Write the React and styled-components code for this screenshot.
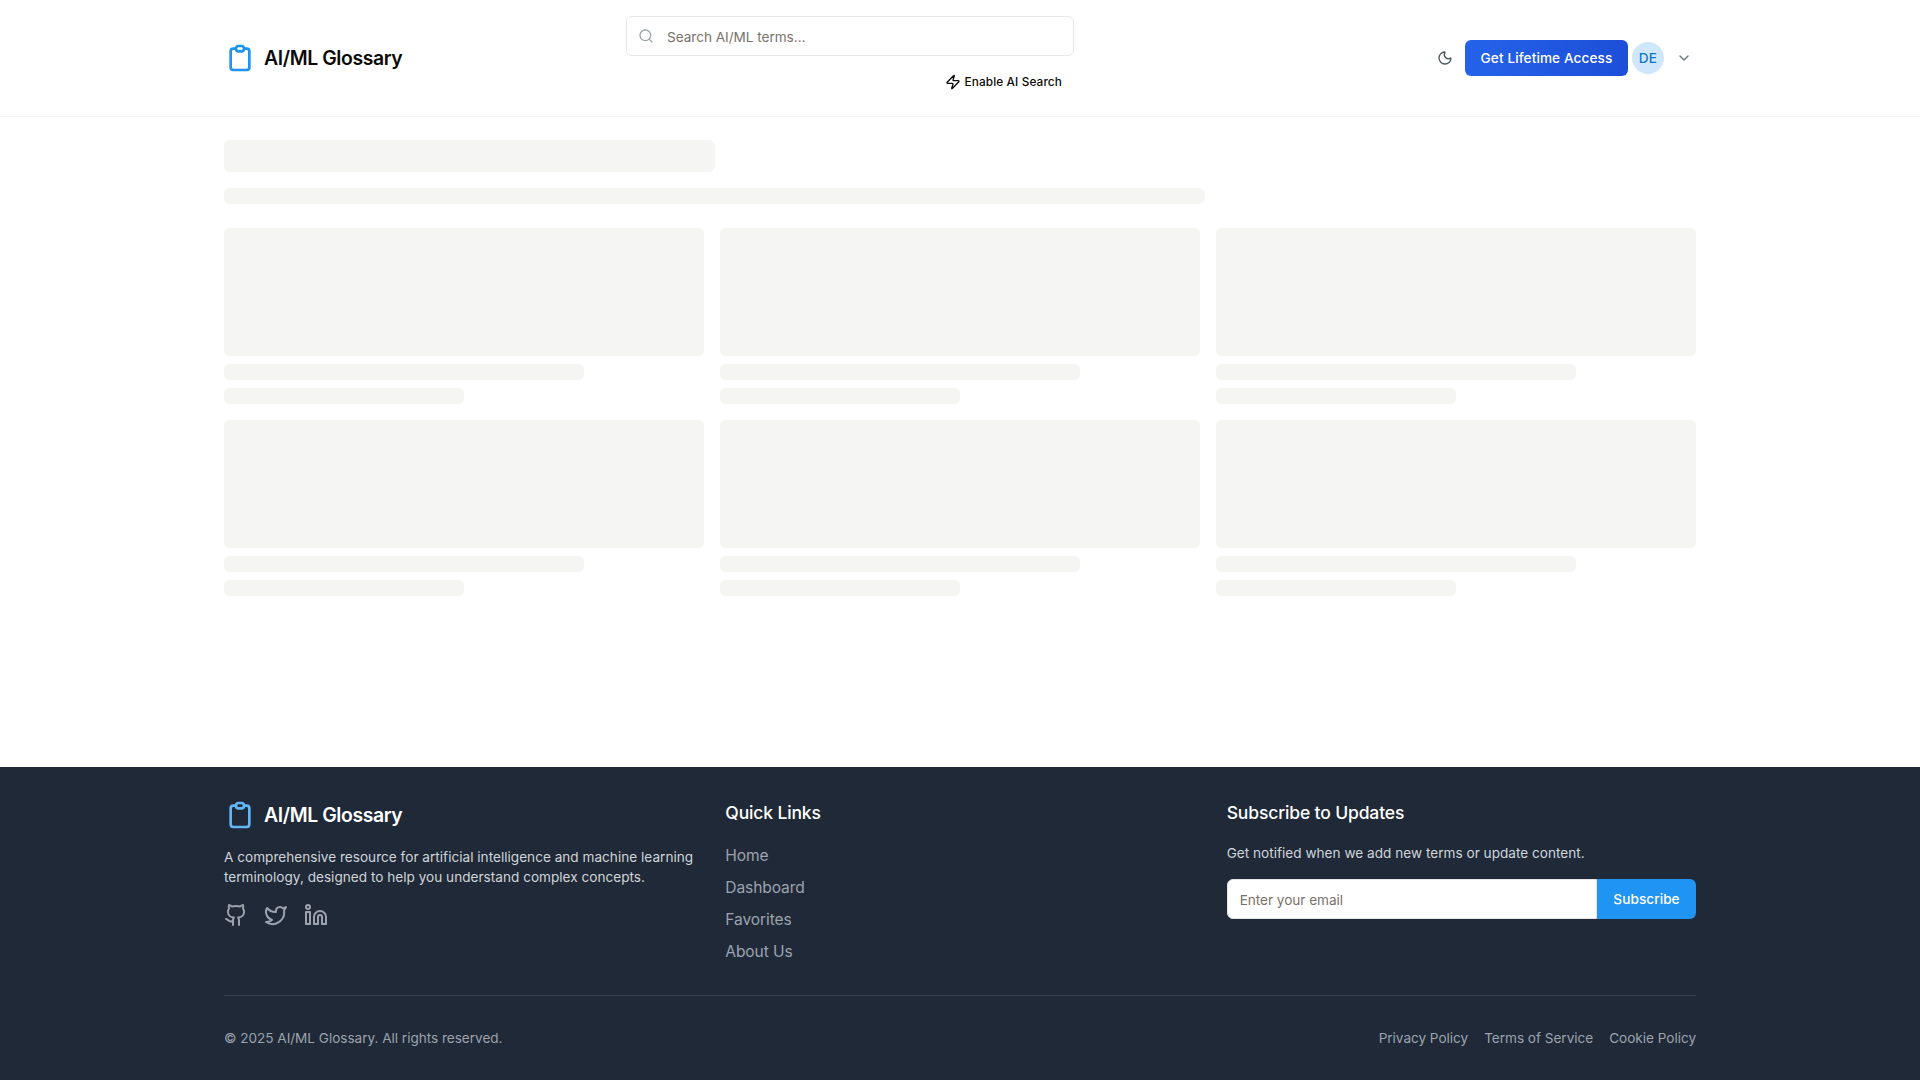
import React from "react";
import styled, { createGlobalStyle, css } from "styled-components";
import { Search, Zap, Moon, ChevronDown, Github, Twitter, Linkedin } from "lucide-react";

const GlobalStyle = createGlobalStyle`
  *, *::before, *::after { box-sizing: border-box; }
  body {
    margin: 0;
    background: #fff;
    color: #0c0a09;
    font-family: Inter, "Liberation Sans", sans-serif;
    font-size: 15.55px;
    line-height: 24px;
  }
  h3, p, ul { margin: 0; padding: 0; }
  ul { list-style: none; }
  button, input { font: inherit; margin: 0; }
  a { color: inherit; text-decoration: none; }
  svg { display: block; flex-shrink: 0; }
`;

const smallText = css`
  font-size: 13.6px;
  line-height: 20px;
`;

const Page = styled.div`
  display: flex;
  flex-direction: column;
  min-height: 100vh;
`;

const Container = styled.div`
  width: 100%;
  max-width: 1536px;
  margin: 0 auto;
  padding: 0 32px;
`;

const Header = styled.header`
  height: 117px;
  border-bottom: 1px solid #f3f4f6;
`;

const HeaderRow = styled(Container)`
  display: grid;
  grid-template-columns: 402px 448px 1fr;
  align-items: center;
  padding-top: 16px;
  padding-bottom: 16px;
`;

const Brand = styled.a`
  display: flex;
  align-items: center;
  gap: 8px;
  height: 32px;
  font-size: 19.4px;
  font-weight: 600;
  letter-spacing: -0.39px;
  line-height: 28px;
  color: ${(p) => p.$color};
  svg { color: ${(p) => p.$iconColor}; }
`;

const SearchArea = styled.div`
  display: flex;
  flex-direction: column;
  align-items: flex-end;
  gap: 8px;
`;

const SearchBox = styled.label`
  display: flex;
  align-items: center;
  gap: 13px;
  width: 100%;
  height: 40px;
  padding: 0 11px;
  border: 1px solid #e5e7eb;
  border-radius: 6px;
  color: #9ca3af;
`;

const TextInput = styled.input`
  ${smallText}
  flex: 1;
  min-width: 0;
  padding: 2px 0 0;
  border: 0;
  outline: 0;
  background: transparent;
  color: #0c0a09;
  letter-spacing: -0.03px;
  &::placeholder { color: #78716c; opacity: 1; }
`;

const AiToggle = styled.button`
  display: flex;
  align-items: center;
  gap: 4px;
  height: 36px;
  padding: 0 12px;
  border: 0;
  background: none;
  color: #0c0a09;
  font-size: 11.8px;
  font-weight: 500;
  letter-spacing: 0.12px;
  line-height: 16px;
`;

const Actions = styled.div`
  display: flex;
  align-items: center;
  justify-content: flex-end;
`;

const IconButton = styled.button`
  display: flex;
  align-items: center;
  justify-content: center;
  width: 40px;
  height: 40px;
  padding: 0;
  border: 0;
  background: none;
  color: ${(p) => p.$color};
`;

const AccessButton = styled.button`
  ${smallText}
  width: 163px;
  height: 36px;
  padding: 0;
  border: 0;
  border-radius: 6px;
  background: linear-gradient(to right, #2563eb, #1d4ed8);
  color: #fff;
  font-weight: 450;
  letter-spacing: 0.1px;
  white-space: nowrap;
`;

const UserMenu = styled.button`
  display: flex;
  align-items: center;
  gap: 12px;
  padding: 0 4px;
  border: 0;
  background: none;
  color: #6b7280;
`;

const Avatar = styled.span`
  ${smallText}
  display: flex;
  align-items: center;
  justify-content: center;
  width: 32px;
  height: 32px;
  border-radius: 50%;
  background: #d0e7fb;
  color: #0f76cb;
  font-weight: 450;
  letter-spacing: 0.3px;
`;

const Main = styled.main`
  flex: 1;
`;

const Content = styled(Container)`
  display: flex;
  flex-direction: column;
  padding-top: 23px;
`;

const Skeleton = styled.div`
  width: ${(p) => p.$width || "100%"};
  height: ${(p) => p.$height || 16}px;
  margin-bottom: ${(p) => p.$gap || 0}px;
  border-radius: 6px;
  background: #f5f5f4;
`;

const CardGrid = styled.div`
  display: grid;
  grid-template-columns: repeat(3, 1fr);
  gap: 16px;
`;

const Card = styled.div`
  display: flex;
  flex-direction: column;
  gap: 8px;
`;

const Footer = styled.footer`
  background: #1f2937;
  color: #fff;
`;

const FooterInner = styled(Container)`
  padding-top: 32px;
  padding-bottom: 32px;
`;

const FooterGrid = styled.div`
  display: grid;
  grid-template-columns: repeat(3, 1fr);
  gap: 32px;
`;

const FooterText = styled.p`
  ${smallText}
  margin: ${(p) => p.$margin};
  color: #d1d5db;
  letter-spacing: 0.01px;
`;

const FooterTitle = styled.h3`
  margin-bottom: 16px;
  font-size: 17.5px;
  font-weight: 450;
  letter-spacing: -0.14px;
  line-height: 28px;
`;

const Socials = styled.div`
  display: flex;
  gap: 16px;
  color: #9ca3af;
`;

const LinkList = styled.ul`
  display: flex;
  flex-direction: column;
  gap: 8px;
  color: #9ca3af;
  letter-spacing: -0.1px;
  line-height: 22px;
  li { height: 24px; padding-top: 2px; }
`;

const SubscribeForm = styled.div`
  display: flex;
  height: 40px;
`;

const EmailField = styled.div`
  display: flex;
  flex: 1;
  align-items: center;
  padding: 0 12px;
  border: 1px solid #e7e5e4;
  border-radius: 6px 0 0 6px;
  background: #fff;
`;

const SubscribeButton = styled.button`
  ${smallText}
  width: 99px;
  padding: 0;
  border: 0;
  border-radius: 0 6px 6px 0;
  background: #2094f3;
  color: #fff;
  font-weight: 450;
  letter-spacing: 0.06px;
`;

const FooterBottom = styled.div`
  ${smallText}
  display: flex;
  justify-content: space-between;
  margin-top: 32px;
  padding-top: 32px;
  border-top: 1px solid #374151;
  color: #9ca3af;
  letter-spacing: -0.03px;
`;

const LegalLinks = styled.nav`
  display: flex;
  gap: 16px;
`;

function ClipboardIcon() {
  return (
    <svg width="32" height="32" viewBox="0 0 24 24" fill="none" stroke="currentColor" strokeWidth="2" strokeLinecap="round" strokeLinejoin="round">
      <path d="M9 5H7a2 2 0 0 0-2 2v12a2 2 0 0 0 2 2h10a2 2 0 0 0 2-2V7a2 2 0 0 0-2-2h-2M9 5a2 2 0 0 0 2 2h2a2 2 0 0 0 2-2M9 5a2 2 0 0 1 2-2h2a2 2 0 0 1 2 2" />
    </svg>
  );
}

const pageLinks = ["Home", "Dashboard", "Favorites", "About Us"];
const legalLinks = ["Privacy Policy", "Terms of Service", "Cookie Policy"];

export default function App() {
  return (
    <Page>
      <GlobalStyle />
      <Header>
        <HeaderRow>
          <Brand $color="#0c0a09" $iconColor="#2094f3">
            <ClipboardIcon />
            <span>AI/ML Glossary</span>
          </Brand>
          <SearchArea>
            <SearchBox>
              <Search size={16} />
              <TextInput placeholder="Search AI/ML terms..." />
            </SearchBox>
            <AiToggle>
              <Zap size={16} />
              <span>Enable AI Search</span>
            </AiToggle>
          </SearchArea>
          <Actions>
            <IconButton $color="#4b5563">
              <Moon size={16} />
            </IconButton>
            <AccessButton>Get Lifetime Access</AccessButton>
            <UserMenu>
              <Avatar>DE</Avatar>
              <ChevronDown size={16} />
            </UserMenu>
          </Actions>
        </HeaderRow>
      </Header>

      <Main>
        <Content>
          <Skeleton $width="33.3333%" $height={32} $gap={16} />
          <Skeleton $width="66.6667%" $gap={24} />
          <CardGrid>
            {Array.from({ length: 6 }, (_, i) => (
              <Card key={i}>
                <Skeleton $height={128} />
                <Skeleton $width="75%" />
                <Skeleton $width="50%" />
              </Card>
            ))}
          </CardGrid>
        </Content>
      </Main>

      <Footer>
        <FooterInner>
          <FooterGrid>
            <div>
              <Brand $color="#fff" $iconColor="#64b5f6">
                <ClipboardIcon />
                <span>AI/ML Glossary</span>
              </Brand>
              <FooterText $margin="16px 0">
                A comprehensive resource for artificial intelligence and machine learning
                terminology, designed to help you understand complex concepts.
              </FooterText>
              <Socials>
                <Github size={24} />
                <Twitter size={24} />
                <Linkedin size={24} />
              </Socials>
            </div>
            <div>
              <FooterTitle>Quick Links</FooterTitle>
              <LinkList>
                {pageLinks.map((label) => (
                  <li key={label}><a>{label}</a></li>
                ))}
              </LinkList>
            </div>
            <div>
              <FooterTitle>Subscribe to Updates</FooterTitle>
              <FooterText $margin="0 0 16px">
                Get notified when we add new terms or update content.
              </FooterText>
              <SubscribeForm>
                <EmailField>
                  <TextInput placeholder="Enter your email" />
                </EmailField>
                <SubscribeButton>Subscribe</SubscribeButton>
              </SubscribeForm>
            </div>
          </FooterGrid>
          <FooterBottom>
            <p>© 2025 AI/ML Glossary. All rights reserved.</p>
            <LegalLinks>
              {legalLinks.map((label) => (
                <a key={label}>{label}</a>
              ))}
            </LegalLinks>
          </FooterBottom>
        </FooterInner>
      </Footer>
    </Page>
  );
}
